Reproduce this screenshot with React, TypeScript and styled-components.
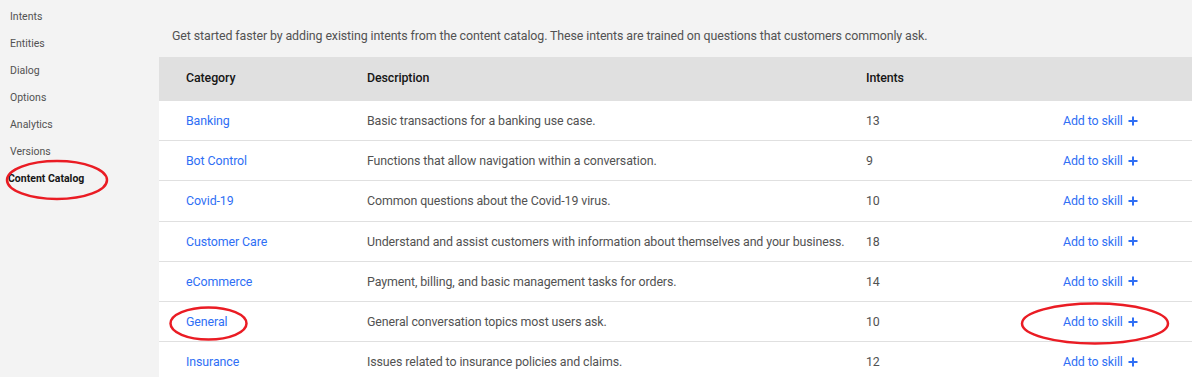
import React from "react";
import styled, { createGlobalStyle } from "styled-components";

const Global = createGlobalStyle`
  html, body { margin: 0; padding: 0; background: #f3f3f3; }
  body { font-family: Roboto, "Noto Sans", sans-serif; }
`;

const Page = styled.div`
  position: relative;
  display: flex;
  width: 1192px;
  height: 377px;
  overflow: hidden;
  background: #f3f3f3;
`;

const Sidebar = styled.nav`
  width: 159px;
  flex: none;
  display: flex;
  flex-direction: column;
  padding-top: 9px;
  box-sizing: border-box;
`;

const NavItem = styled.div<{ $active?: boolean }>`
  flex: none;
  height: 27px;
  line-height: 16px;
  padding-left: ${(p) => (p.$active ? "8px" : "10px")};
  font-size: 10.5px;
  color: ${(p) => (p.$active ? "#161616" : "#525252")};
  font-weight: ${(p) => (p.$active ? 700 : 400)};
  white-space: nowrap;
`;

const Main = styled.main`
  flex: 1;
  display: flex;
  flex-direction: column;
`;

const Intro = styled.p`
  flex: none;
  margin: 0;
  height: 57px;
  padding: 27px 0 0 13px;
  box-sizing: border-box;
  font-size: 12.4px;
  letter-spacing: -0.1px;
  line-height: 18px;
  color: #525252;
  white-space: nowrap;
`;

const Table = styled.div`
  flex: none;
  display: flex;
  flex-direction: column;
  background: #fff;
`;

const Row = styled.div<{ $header?: boolean }>`
  flex: none;
  display: grid;
  grid-template-columns: 181px 499px 197px 1fr;
  align-items: center;
  height: ${(p) => (p.$header ? "44px" : "40.2px")};
  padding-left: 27px;
  padding-bottom: ${(p) => (p.$header ? "4px" : "0")};
  box-sizing: border-box;
  background: ${(p) => (p.$header ? "#e0e0e0" : "#ffffff")};
  border-bottom: ${(p) => (p.$header ? "none" : "1px solid #e0e0e0")};
  font-size: 12.4px;
  letter-spacing: -0.1px;
  color: ${(p) => (p.$header ? "#161616" : "#525252")};
  font-weight: ${(p) => (p.$header ? 500 : 400)};
  white-space: nowrap;
`;

const Cell = styled.div``;

const Link = styled.span`
  color: #2f6ff5;
`;

const AddLink = styled.span`
  color: #2f6ff5;
  display: inline-flex;
  align-items: center;
  gap: 5px;
`;

const Plus = styled.svg`
  width: 10px;
  height: 10px;
`;

const Marks = styled.svg`
  position: absolute;
  left: 0;
  top: 0;
  pointer-events: none;
`;

const navItems = ["Intents", "Entities", "Dialog", "Options", "Analytics", "Versions"];

const rows: [string, string, number][] = [
  ["Banking", "Basic transactions for a banking use case.", 13],
  ["Bot Control", "Functions that allow navigation within a conversation.", 9],
  ["Covid-19", "Common questions about the Covid-19 virus.", 10],
  ["Customer Care", "Understand and assist customers with information about themselves and your business.", 18],
  ["eCommerce", "Payment, billing, and basic management tasks for orders.", 14],
  ["General", "General conversation topics most users ask.", 10],
  ["Insurance", "Issues related to insurance policies and claims.", 12],
];

export default function App() {
  return (
    <>
      <Global />
      <Page>
        <Sidebar>
          {navItems.map((n) => (
            <NavItem key={n}>{n}</NavItem>
          ))}
          <NavItem $active>Content Catalog</NavItem>
        </Sidebar>
        <Main>
          <Intro>
            Get started faster by adding existing intents from the content catalog. These intents are trained on questions that customers commonly ask.
          </Intro>
          <Table>
            <Row $header>
              <Cell>Category</Cell>
              <Cell>Description</Cell>
              <Cell>Intents</Cell>
              <Cell />
            </Row>
            {rows.map(([c, d, n]) => (
              <Row key={c}>
                <Cell>
                  <Link>{c}</Link>
                </Cell>
                <Cell>{d}</Cell>
                <Cell>{n}</Cell>
                <Cell>
                  <AddLink>
                    Add to skill
                    <Plus viewBox="0 0 10 10">
                      <path d="M5 0.5v9M0.5 5h9" stroke="#2f6ff5" strokeWidth="2" />
                    </Plus>
                  </AddLink>
                </Cell>
              </Row>
            ))}
          </Table>
        </Main>
        <Marks width="1192" height="377" viewBox="0 0 1192 377">
          <ellipse cx="57" cy="180" rx="50" ry="19" fill="none" stroke="#ea1c24" strokeWidth="2.5" />
          <ellipse cx="208.5" cy="323.5" rx="38" ry="16" fill="none" stroke="#ea1c24" strokeWidth="2.5" />
          <ellipse cx="1095" cy="323.5" rx="73" ry="20" fill="none" stroke="#ea1c24" strokeWidth="2.5" />
        </Marks>
      </Page>
    </>
  );
}
